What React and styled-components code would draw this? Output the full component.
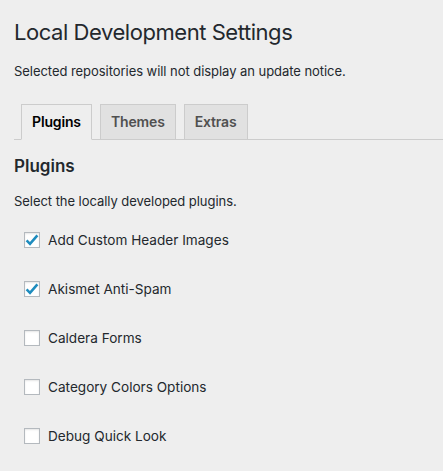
import React from "react";
import styled, { createGlobalStyle } from "styled-components";

const Global = createGlobalStyle`
  html, body { margin: 0; padding: 0; background: #eeeeee; }
  body { font-family: Inter, "Noto Sans", sans-serif; color: #23282d; }
`;

const Wrap = styled.div`
  padding: 0 0 0 14px;
  min-height: 471px;
  box-sizing: border-box;
`;

const Title = styled.h1`
  margin: 0;
  padding-top: 17px;
  font-size: 22px;
  font-weight: 400;
  letter-spacing: -0.45px;
  line-height: 30px;
  color: #23282d;
`;

const Text = styled.p`
  margin: ${(p) => p.$mt || 0}px 0 0;
  font-size: 13px;
  line-height: 19.5px;
  letter-spacing: -0.05px;
  color: #23282d;
`;

const TabBar = styled.nav`
  display: flex;
  align-items: flex-end;
  margin-top: 22px;
  border-bottom: 1px solid #cccccc;
  height: 35px;
`;

const Tab = styled.a`
  box-sizing: border-box;
  height: 36px;
  margin-left: ${(p) => (p.$first ? 7 : 8)}px;
  margin-bottom: -1px;
  padding: 5px 10px;
  border: 1px solid #cccccc;
  border-bottom-color: ${(p) => (p.$active ? "#eeeeee" : "#cccccc")};
  background: ${(p) => (p.$active ? "#eeeeee" : "#e1e1e1")};
  color: ${(p) => (p.$active ? "#000" : "#505050")};
  font-size: 14px;
  font-weight: 600;
  letter-spacing: -0.15px;
  line-height: 24px;
  text-decoration: none;
`;

const Heading = styled.h2`
  margin: 15px 0 0;
  font-size: 17px;
  font-weight: 600;
  line-height: 22px;
  color: #23282d;
`;

const List = styled.div`
  display: flex;
  flex-direction: column;
  gap: 33px;
  margin-top: 21px;
  padding-left: 10px;
`;

const Row = styled.label`
  display: flex;
  align-items: center;
  gap: 8px;
  height: 16px;
  font-size: 13.6px;
  color: #23282d;
`;

const Box = styled.span`
  box-sizing: border-box;
  width: 16px;
  height: 16px;
  flex: none;
  border: 1px solid #b4b9be;
  background: #fff;
  box-shadow: inset 0 1px 2px rgba(0, 0, 0, 0.1);
  display: flex;
  align-items: center;
  justify-content: center;
`;

const CheckSvg = styled.svg`
  flex: none;
  margin: -1px;
`;

const Check = () => (
  <CheckSvg width="16" height="16" viewBox="0 0 16 16">
    <path d="M2.6 8.4 L6 11.8 L13.4 3.4" fill="none" stroke="#1e8cbe" strokeWidth="2.6" />
  </CheckSvg>
);

const items = [
  ["Add Custom Header Images", true],
  ["Akismet Anti-Spam", true],
  ["Caldera Forms", false],
  ["Category Colors Options", false],
  ["Debug Quick Look", false],
];

export default function App() {
  return (
    <Wrap>
      <Global />
      <Title>Local Development Settings</Title>
      <Text $mt={15}>Selected repositories will not display an update notice.</Text>
      <TabBar>
        <Tab $active $first>Plugins</Tab>
        <Tab>Themes</Tab>
        <Tab>Extras</Tab>
      </TabBar>
      <Heading>Plugins</Heading>
      <Text $mt={15}>Select the locally developed plugins.</Text>
      <List>
        {items.map(([name, on]) => (
          <Row key={name}>
            <Box>{on && <Check />}</Box>
            {name}
          </Row>
        ))}
      </List>
    </Wrap>
  );
}
